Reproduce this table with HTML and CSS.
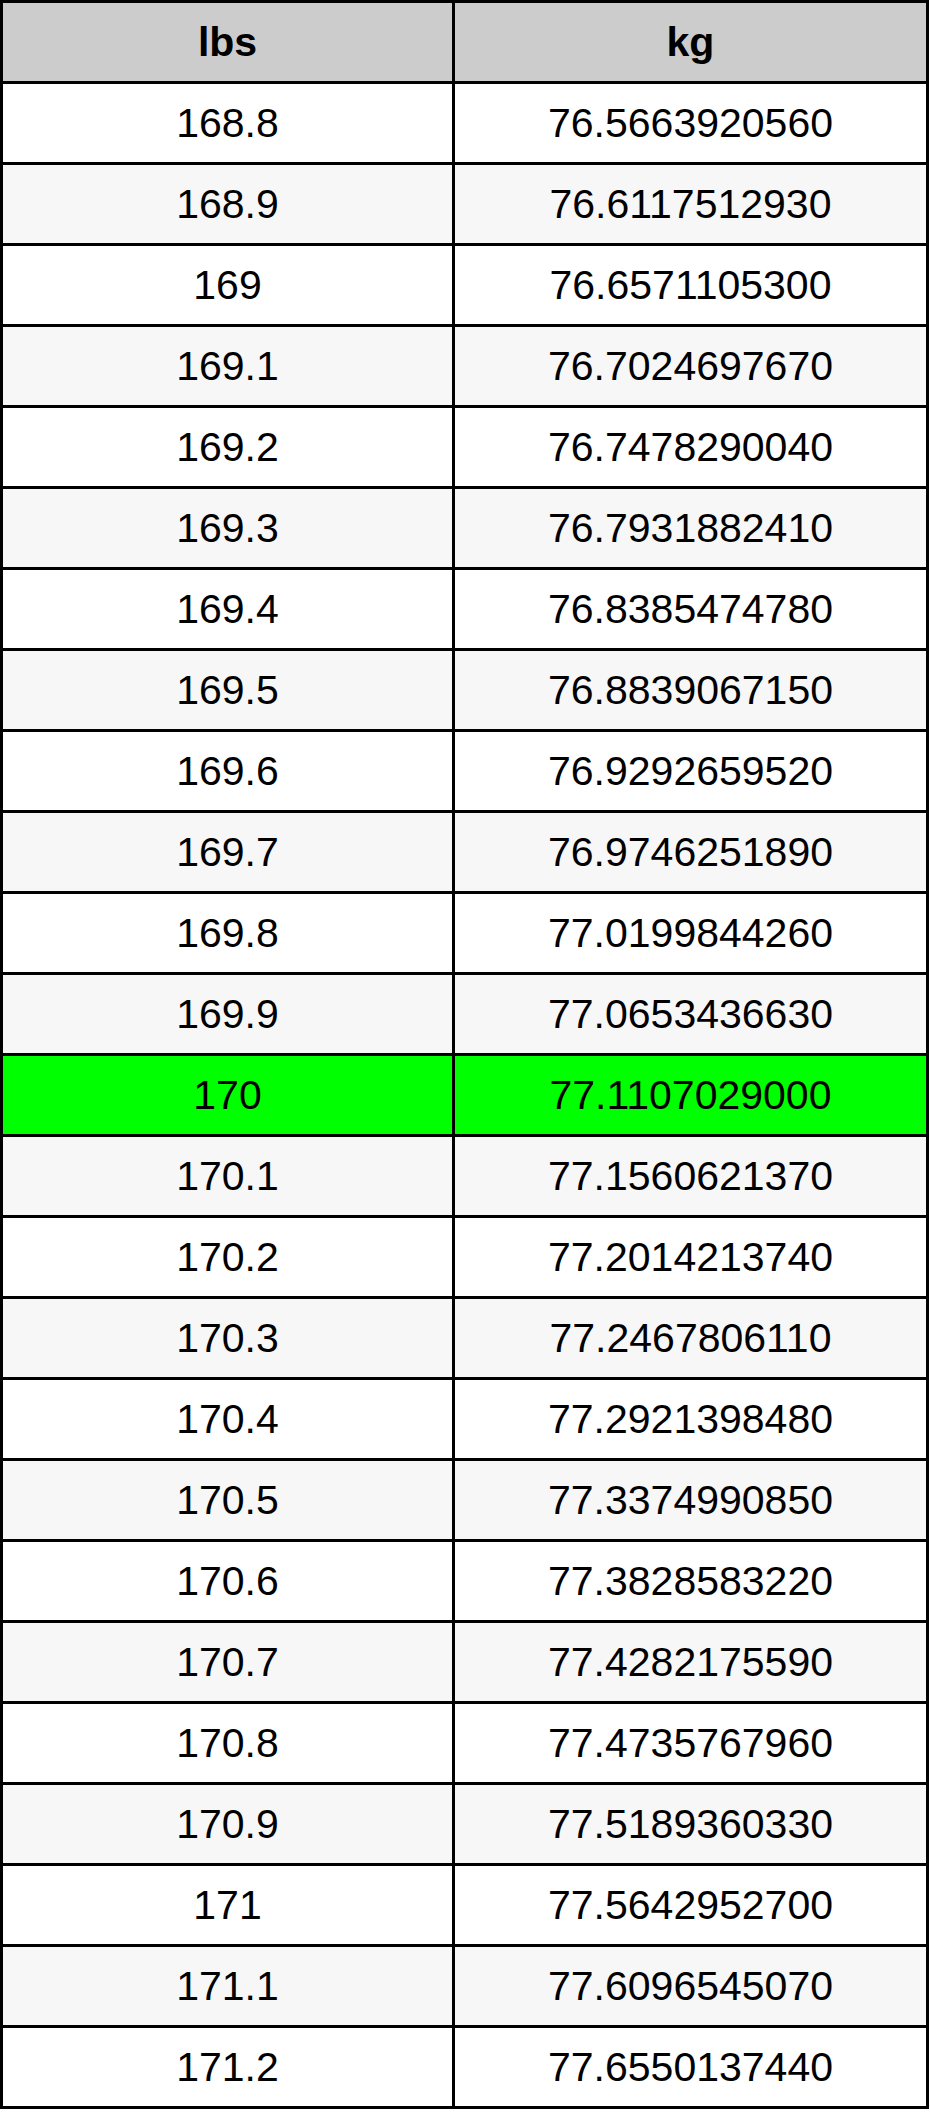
FILE: index.html
```html
<!DOCTYPE html>
<html>
<head>
<meta charset="utf-8">
<title>lbs to kg</title>
<link rel="stylesheet" href="styles.css">
</head>
<body>
<div class="table">
  <div class="cell head">lbs</div><div class="cell head">kg</div>
  <div class="cell">168.8</div><div class="cell">76.5663920560</div>
  <div class="cell alt">168.9</div><div class="cell alt">76.6117512930</div>
  <div class="cell">169</div><div class="cell">76.6571105300</div>
  <div class="cell alt">169.1</div><div class="cell alt">76.7024697670</div>
  <div class="cell">169.2</div><div class="cell">76.7478290040</div>
  <div class="cell alt">169.3</div><div class="cell alt">76.7931882410</div>
  <div class="cell">169.4</div><div class="cell">76.8385474780</div>
  <div class="cell alt">169.5</div><div class="cell alt">76.8839067150</div>
  <div class="cell">169.6</div><div class="cell">76.9292659520</div>
  <div class="cell alt">169.7</div><div class="cell alt">76.9746251890</div>
  <div class="cell">169.8</div><div class="cell">77.0199844260</div>
  <div class="cell alt">169.9</div><div class="cell alt">77.0653436630</div>
  <div class="cell hl">170</div><div class="cell hl">77.1107029000</div>
  <div class="cell alt">170.1</div><div class="cell alt">77.1560621370</div>
  <div class="cell">170.2</div><div class="cell">77.2014213740</div>
  <div class="cell alt">170.3</div><div class="cell alt">77.2467806110</div>
  <div class="cell">170.4</div><div class="cell">77.2921398480</div>
  <div class="cell alt">170.5</div><div class="cell alt">77.3374990850</div>
  <div class="cell">170.6</div><div class="cell">77.3828583220</div>
  <div class="cell alt">170.7</div><div class="cell alt">77.4282175590</div>
  <div class="cell">170.8</div><div class="cell">77.4735767960</div>
  <div class="cell alt">170.9</div><div class="cell alt">77.5189360330</div>
  <div class="cell">171</div><div class="cell">77.5642952700</div>
  <div class="cell alt">171.1</div><div class="cell alt">77.6096545070</div>
  <div class="cell">171.2</div><div class="cell">77.6550137440</div>
</div>
</body>
</html>
```

FILE: styles.css
```css
html, body {
  margin: 0;
  padding: 0;
  background: #ffffff;
}

.table {
  display: inline-grid;
  grid-template-columns: 449px 471px;
  grid-auto-rows: 78px;
  gap: 3px;
  padding: 3px;
  background: #000000;
  font-family: "Liberation Sans", Arial, sans-serif;
  font-size: 41px;
  color: #000000;
}

.cell {
  display: flex;
  align-items: center;
  justify-content: center;
  background: #ffffff;
  line-height: 1;
}

.cell.alt {
  background: #f7f7f7;
}

.cell.head {
  background: #cccccc;
  font-weight: bold;
}

.cell.hl {
  background: #00ff00;
}
```
